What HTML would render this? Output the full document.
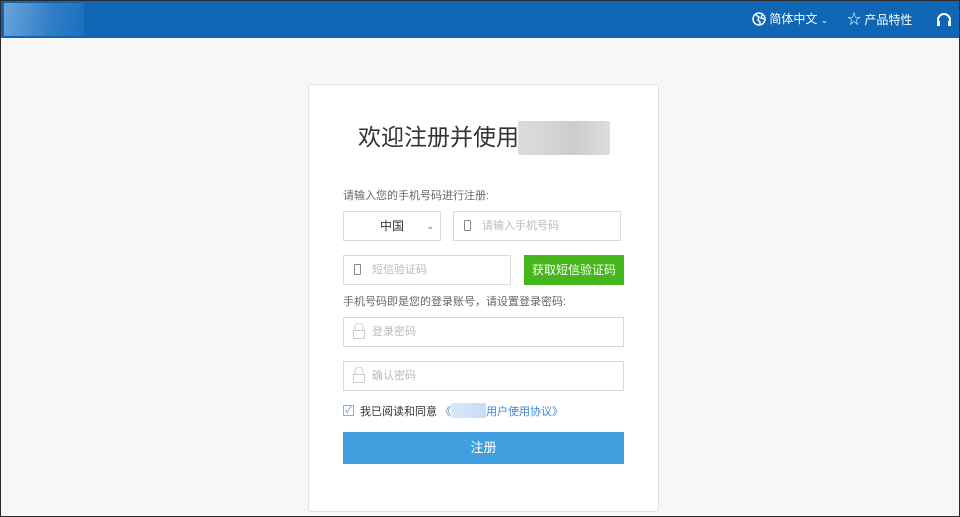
<!DOCTYPE html>
<html><head><meta charset="utf-8"><style>
*{margin:0;padding:0;box-sizing:border-box}
body{width:960px;height:517px;overflow:hidden;background:#f7f7f7;font-family:"Liberation Sans","Noto Sans CJK SC",sans-serif;border:1px solid #2a2a2a}
.hdr{position:absolute;left:0;top:0;width:960px;height:38px;background:#0e66b5;border:1px solid #2a2a2a;border-bottom:none}
.logo{position:absolute;left:3px;top:2px;width:80px;height:33px;background:linear-gradient(100deg,#6aa5da,#2f7dc6 60%,#1c6fbe)}
.nav{position:absolute;top:11px;color:#fff;font-size:12px;line-height:14px}
.card{position:absolute;left:308px;top:84px;width:351px;height:428px;background:#fff;border:1px solid #e3e3e3;border-radius:3px}
.a{position:absolute}
.title{left:49px;top:36px;font-size:23px;color:#333;line-height:32px}
.blur{left:209px;top:36px;width:92px;height:34px;background:linear-gradient(90deg,#ddd,#ccc 60%,#dedede)}
.lab{font-size:11px;color:#666;left:34px}
.in{border:1px solid #d9d9d9;background:#fff;height:30px;font-size:11px;color:#bbb;line-height:28px}
.btn{color:#fff;text-align:center}
</style></head><body>
<div class="hdr">
<div class="logo"></div>
<div class="nav" style="left:751px"><svg width="14" height="14" viewBox="0 0 14 14" style="vertical-align:-3px"><circle cx="7" cy="7" r="6" fill="none" stroke="#fff" stroke-width="1.5"/><path d="M4 3l3 2-1 3 2 2v2M10 3l-1 3 3 1" stroke="#fff" fill="none" stroke-width="1.5"/></svg> 简体中文 <span style="font-size:9px">⌄</span></div>
<div class="nav" style="left:846px"><span style="font-size:14px">☆</span> 产品特性</div>
<svg class="a" style="left:934px;top:11px" width="18" height="16" viewBox="0 0 18 16"><path d="M3 10V8a6 6 0 0 1 12 0v2" fill="none" stroke="#fff" stroke-width="2"/><rect x="2" y="9" width="3" height="5" fill="#fff"/><rect x="13" y="9" width="3" height="5" fill="#fff"/></svg>
</div>
<div class="card">
<div class="a title">欢迎注册并使用</div>
<div class="a blur"></div>
<div class="a lab" style="top:102px">请输入您的手机号码进行注册:</div>
<div class="a in" style="left:34px;top:126px;width:98px;color:#333;font-size:12px;text-align:center">中国 <span style="position:absolute;right:6px;font-size:9px;color:#666">⌄</span></div>
<div class="a in" style="left:144px;top:126px;width:168px;padding-left:10px"><span style="display:inline-block;width:7px;height:11px;border:1px solid #888;border-radius:1px;vertical-align:-2px;margin-right:11px"></span>请输入手机号码</div>
<div class="a in" style="left:34px;top:170px;width:168px;padding-left:10px"><span style="display:inline-block;width:7px;height:11px;border:1px solid #888;border-radius:1px;vertical-align:-2px;margin-right:11px"></span>短信验证码</div>
<div class="a btn" style="left:215px;top:170px;width:100px;height:30px;line-height:30px;background:#45b61b;font-size:12px">获取短信验证码</div>
<div class="a lab" style="top:208px">手机号码即是您的登录账号，请设置登录密码:</div>
<div class="a in" style="left:34px;top:232px;width:281px;padding-left:8px"><svg width="14" height="16" viewBox="0 0 14 16" style="vertical-align:-4px;margin-right:6px"><path d="M3 7V4a4 4 0 0 1 8 0v3" fill="none" stroke="#ccc"/><rect x="1.5" y="7.5" width="11" height="8" fill="none" stroke="#ccc"/></svg>登录密码</div>
<div class="a in" style="left:34px;top:276px;width:281px;padding-left:8px"><svg width="14" height="16" viewBox="0 0 14 16" style="vertical-align:-4px;margin-right:6px"><path d="M3 7V4a4 4 0 0 1 8 0v3" fill="none" stroke="#ccc"/><rect x="1.5" y="7.5" width="11" height="8" fill="none" stroke="#ccc"/></svg>确认密码</div>
<div class="a" style="left:34px;top:320px;width:11px;height:11px;border:1px solid #aaa;font-size:9px;color:#3b88d0;line-height:9px;text-align:center">✓</div>
<div class="a" style="left:51px;top:318px;font-size:11px;color:#333">我已阅读和同意 <span style="color:#3b88d0">《<span style="display:inline-block;width:35px;height:15px;background:linear-gradient(90deg,#d8e8f8,#c8dcf5);vertical-align:-3px"></span>用户使用协议》</span></div>
<div class="a btn" style="left:34px;top:347px;width:281px;height:32px;line-height:32px;background:#419fdf;font-size:13px">注册</div>
</div>
</body></html>
